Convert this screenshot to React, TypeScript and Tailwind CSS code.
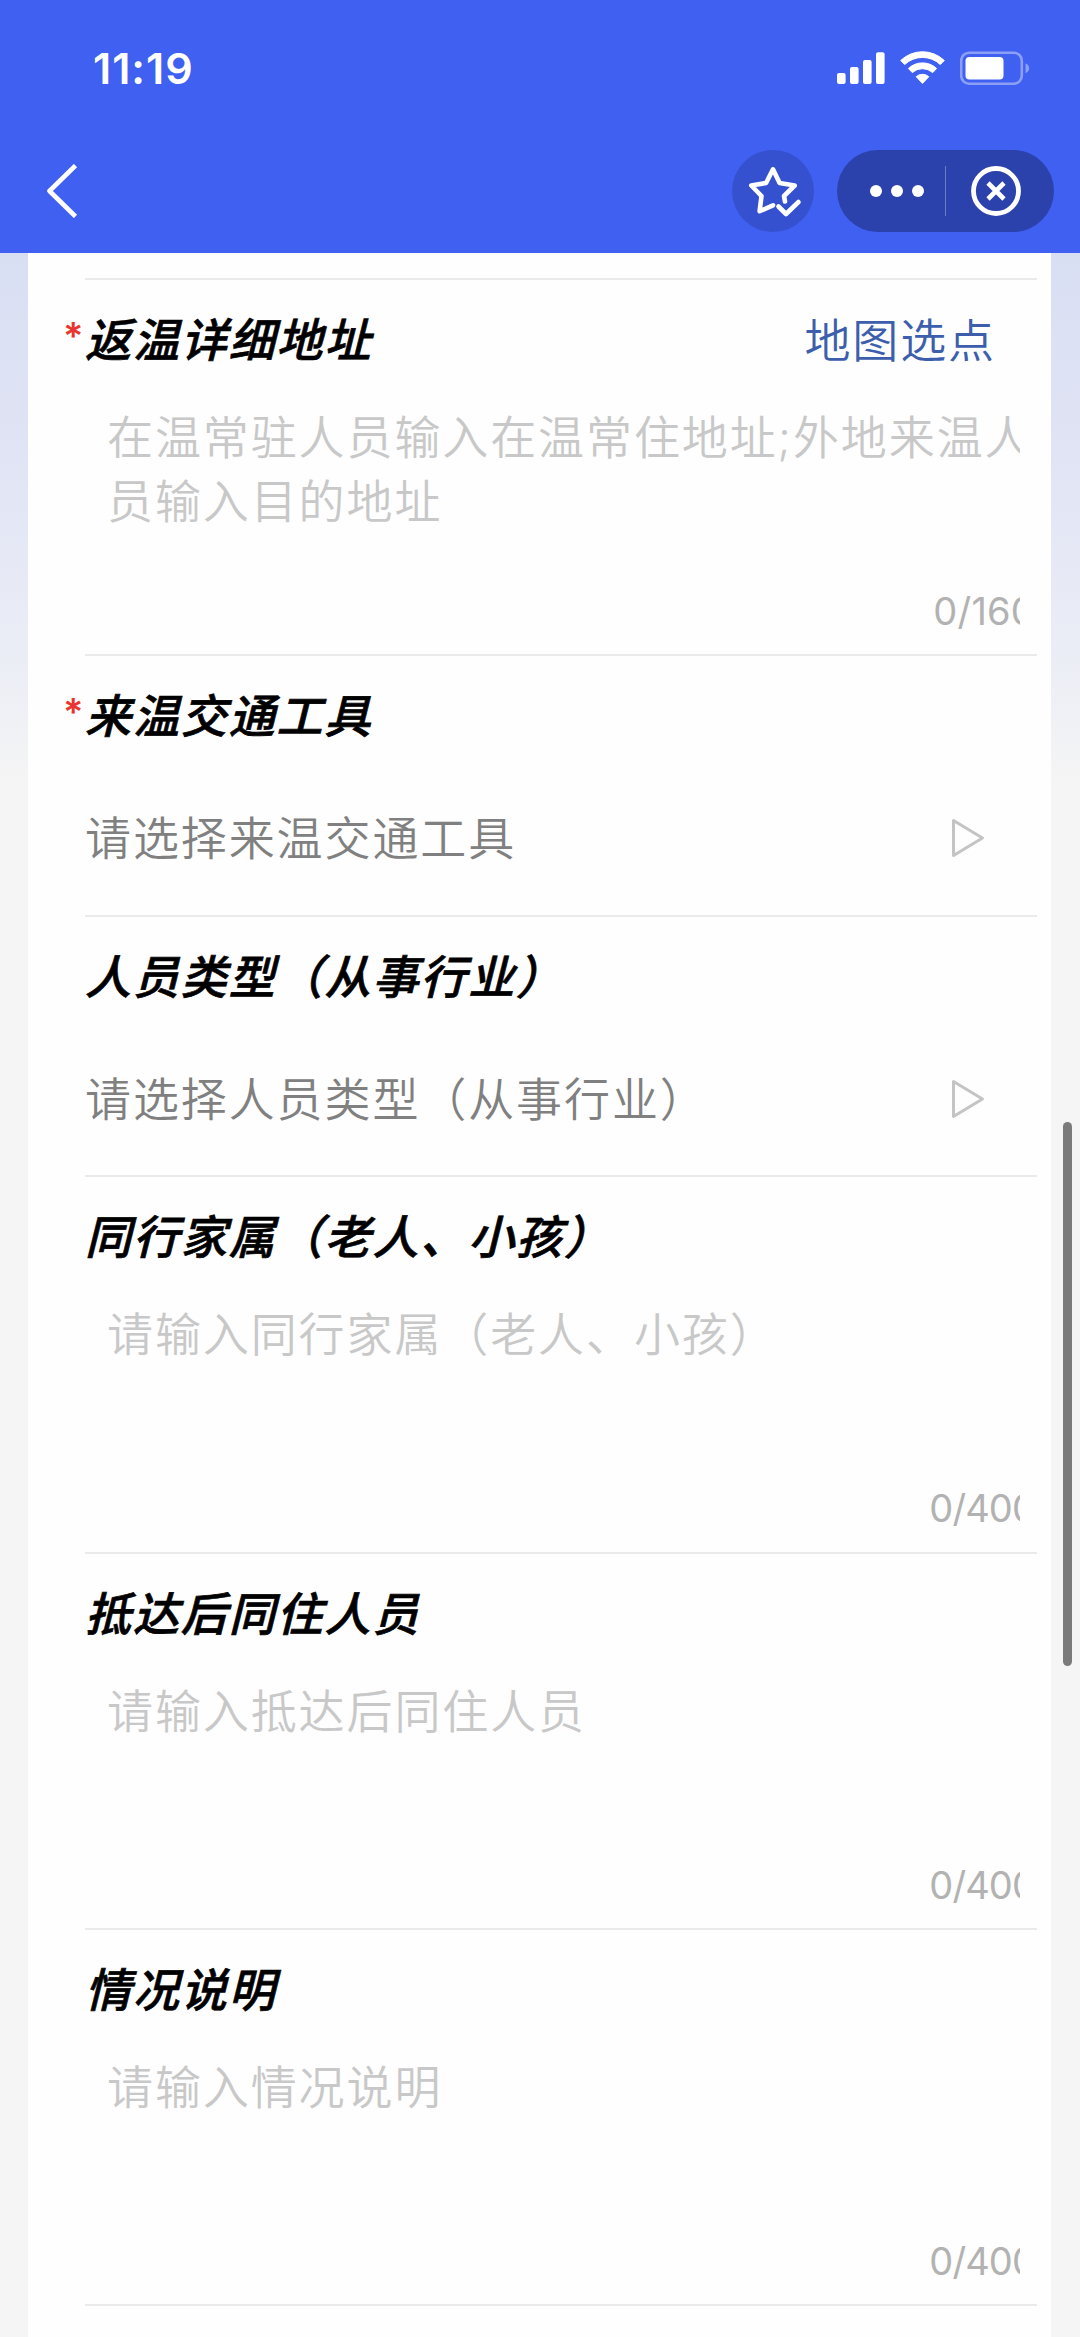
import React from 'react';

const StatusBar: React.FC = () => (
  <div className="h-[134px] pl-[93px] pr-[50px] pt-[47px] flex justify-between items-start">
    <span className="text-[43px] leading-[42px] font-semibold tracking-[1px] text-white">11:19</span>

    <div className="flex items-start pt-[4px]">
      {/* Signal */}
      <svg className="w-[48px] h-[34px]" viewBox="0 0 48 34" fill="#fff">
        <rect x="0" y="22" width="8.6" height="11" rx="2" />
        <rect x="13" y="16" width="8.6" height="17" rx="2" />
        <rect x="26" y="9" width="8.6" height="24" rx="2" />
        <rect x="39" y="1.3" width="8.6" height="31.7" rx="2" />
      </svg>
      {/* Wifi */}
      <svg className="w-[46px] h-[34px] ml-[15px]" viewBox="0 0 46 34" fill="#fff" stroke="#fff" strokeWidth="1" strokeLinejoin="round">
        <path d="M0.700 9.500A31.500 31.500 0 0 1 44.300 9.500L40.300 13.500A26 26 0 0 0 4.700 13.500Z" />
        <path d="M8.400 17.500A20.500 20.500 0 0 1 36.600 17.500L32.700 21.600A15.200 15.200 0 0 0 12.300 21.600Z" />
        <path d="M16.200 25.700A9.500 9.500 0 0 1 28.800 25.700L22.500 32.400Z" />
      </svg>
      {/* Battery */}
      <svg className="w-[70px] h-[34px] ml-[14px]" viewBox="0 0 70 34" fill="none">
        <rect x="1.2" y="1.7" width="60.6" height="31" rx="8" stroke="#8b9ff7" strokeWidth="2.6" />
        <rect x="5.5" y="6" width="38" height="22.5" rx="4" fill="#fff" />
        <path d="M65.5 12.3c2.300 1 3.700 2.800 3.700 5s-1.400 4-3.700 5z" fill="#8b9ff7" />
      </svg>
    </div>
  </div>
);

const NavBar: React.FC = () => (
  <div className="h-[119px] pl-[44px] pr-[26px] pt-[16px] flex justify-between items-start">
    <svg className="w-[34px] h-[54px] mt-[14px]" viewBox="0 0 34 54" fill="none">
      <path d="M31.500 1.500L5.500 27L31.500 52.500" stroke="#fff" strokeWidth="4.600" strokeLinejoin="round" />
    </svg>

    <div className="flex gap-[23px]">
      <div className="w-[82px] h-[82px] rounded-full bg-[#3551cf]">
        <svg className="w-[82px] h-[82px]" viewBox="0 0 82 82" fill="none" stroke="#fff" strokeWidth="4.600" strokeLinecap="round" strokeLinejoin="round">
          <path d="M41 55.300L27.600 61.200L29.500 46L19.300 35.500L34.100 33L41 19.300L47.600 33L62.700 35.500L52 46L53 51.500" />
          <path d="M46.500 56.500L54 64L66.500 52" />
        </svg>
      </div>

      <div className="w-[217px] h-[82px] rounded-full bg-[#2b41ac] flex items-center">
        <div className="flex gap-[9px] ml-[33px]">
          <span className="size-[12px] rounded-full bg-white" />
          <span className="size-[12px] rounded-full bg-white" />
          <span className="size-[12px] rounded-full bg-white" />
        </div>
        <span className="w-px h-[50px] ml-[21px] bg-[#6b7cc8]" />
        <svg className="w-[50px] h-[50px] ml-[25px]" viewBox="0 0 50 50" fill="none" stroke="#fff">
          <circle cx="25" cy="25" r="22.500" strokeWidth="4.800" />
          <path d="M17 17L33 33M33 17L17 33" strokeWidth="4.600" />
        </svg>
      </div>
    </div>
  </div>
);

const Title: React.FC<{ text: string; required?: boolean; action?: string }> = ({ text, required, action }) => (
  <div className="h-[64px] flex items-center justify-between pr-[41px]">
    <div className="flex items-center">
      {required && (
        <span className="w-[22px] -ml-[22px] h-[64px] pt-[3px] text-[38px] leading-[50px] font-semibold text-[#e9352f]">*</span>
      )}
      <h2 className="text-[46px] leading-[64px] tracking-[1.9px] font-medium italic text-black whitespace-nowrap [-webkit-text-stroke:0.7px_black]">
        {text}
      </h2>
    </div>
    {action && (
      <a href="#map" className="text-[46px] leading-[64px] tracking-[1.9px] font-[350] text-[#3c5ead]">{action}</a>
    )}
  </div>
);

interface TextFieldProps {
  title: string;
  placeholder: string[];
  max: number;
  required?: boolean;
  action?: string;
}

const TextField: React.FC<TextFieldProps> = ({ title, placeholder, max, required, action }) => (
  <section className="h-[376.4px] ml-[57px] mr-[14px] pt-[28px] border-b-2 border-[#eaeaea]">
    <Title text={title} required={required} action={action} />
    <div className="h-[254px] mt-[33px] ml-[22px] mr-[17px] -mb-[10px] overflow-hidden flex flex-col justify-between">
      <div className="text-[46px] leading-[64px] tracking-[1.9px] font-[350] text-[#c8c8c8] whitespace-nowrap">
        {placeholder.map((line) => (
          <p key={line}>{line}</p>
        ))}
      </div>
      <div className="h-[72px] flex justify-end">
        <span
          className={`-mr-[15px] text-[38px] leading-[48px] text-[#b2b2b2] ${max === 160 ? 'tracking-[0.2px]' : 'tracking-[-0.9px]'}`}
        >
          0/{max}
        </span>
      </div>
    </div>
  </section>
);

const SelectField: React.FC<{ title: string; placeholder: string; required?: boolean }> = ({ title, placeholder, required }) => (
  <section className="h-[260.4px] ml-[57px] mr-[14px] pt-[28px] border-b-2 border-[#eaeaea]">
    <Title text={title} required={required} />
    <div className="h-[64px] mt-[58px] pr-[52px] flex items-center justify-between">
      <span className="text-[46px] leading-[64px] tracking-[1.9px] font-[350] text-[#808080] whitespace-nowrap">{placeholder}</span>
      <svg className="w-[34px] h-[40px]" viewBox="0 0 34 40" fill="none">
        <path d="M2.500 2.500L31.500 20L2.500 37.500Z" stroke="#c4c4c4" strokeWidth="3" strokeLinejoin="round" />
      </svg>
    </div>
  </section>
);

export default function App() {
  return (
    <div className="relative w-[1080px] h-[2337px] overflow-hidden flex flex-col bg-[#f5f5f5] font-[Inter,'Noto_Sans_CJK_SC',sans-serif]">
      <header className="h-[253px] shrink-0 bg-[#4060f1]">
        <StatusBar />
        <NavBar />
      </header>

      <main className="flex-1 pl-[28px] pr-[29px] bg-[linear-gradient(180deg,#d9dff3_0px,#dfe3f4_180px,#ebedf6_400px,#f5f5f5_530px)]">
        <div className="h-full bg-[#fefefe]">
          <div className="h-[27px] ml-[57px] mr-[14px] border-b-2 border-[#eaeaea]" />
          <TextField
            title="返温详细地址"
            placeholder={['在温常驻人员输入在温常住地址;外地来温人', '员输入目的地址']}
            max={160}
            required
            action="地图选点"
          />
          <SelectField title="来温交通工具" placeholder="请选择来温交通工具" required />
          <SelectField title="人员类型（从事行业）" placeholder="请选择人员类型（从事行业）" />
          <TextField title="同行家属（老人、小孩）" placeholder={['请输入同行家属（老人、小孩）']} max={400} />
          <TextField title="抵达后同住人员" placeholder={['请输入抵达后同住人员']} max={400} />
          <TextField title="情况说明" placeholder={['请输入情况说明']} max={400} />
        </div>
      </main>

      {/* Scroll indicator, floats over the page */}
      <div className="absolute right-[8px] top-[1122px] w-[9px] h-[544px] rounded-full bg-[#7b7b7b]" />
    </div>
  );
}
